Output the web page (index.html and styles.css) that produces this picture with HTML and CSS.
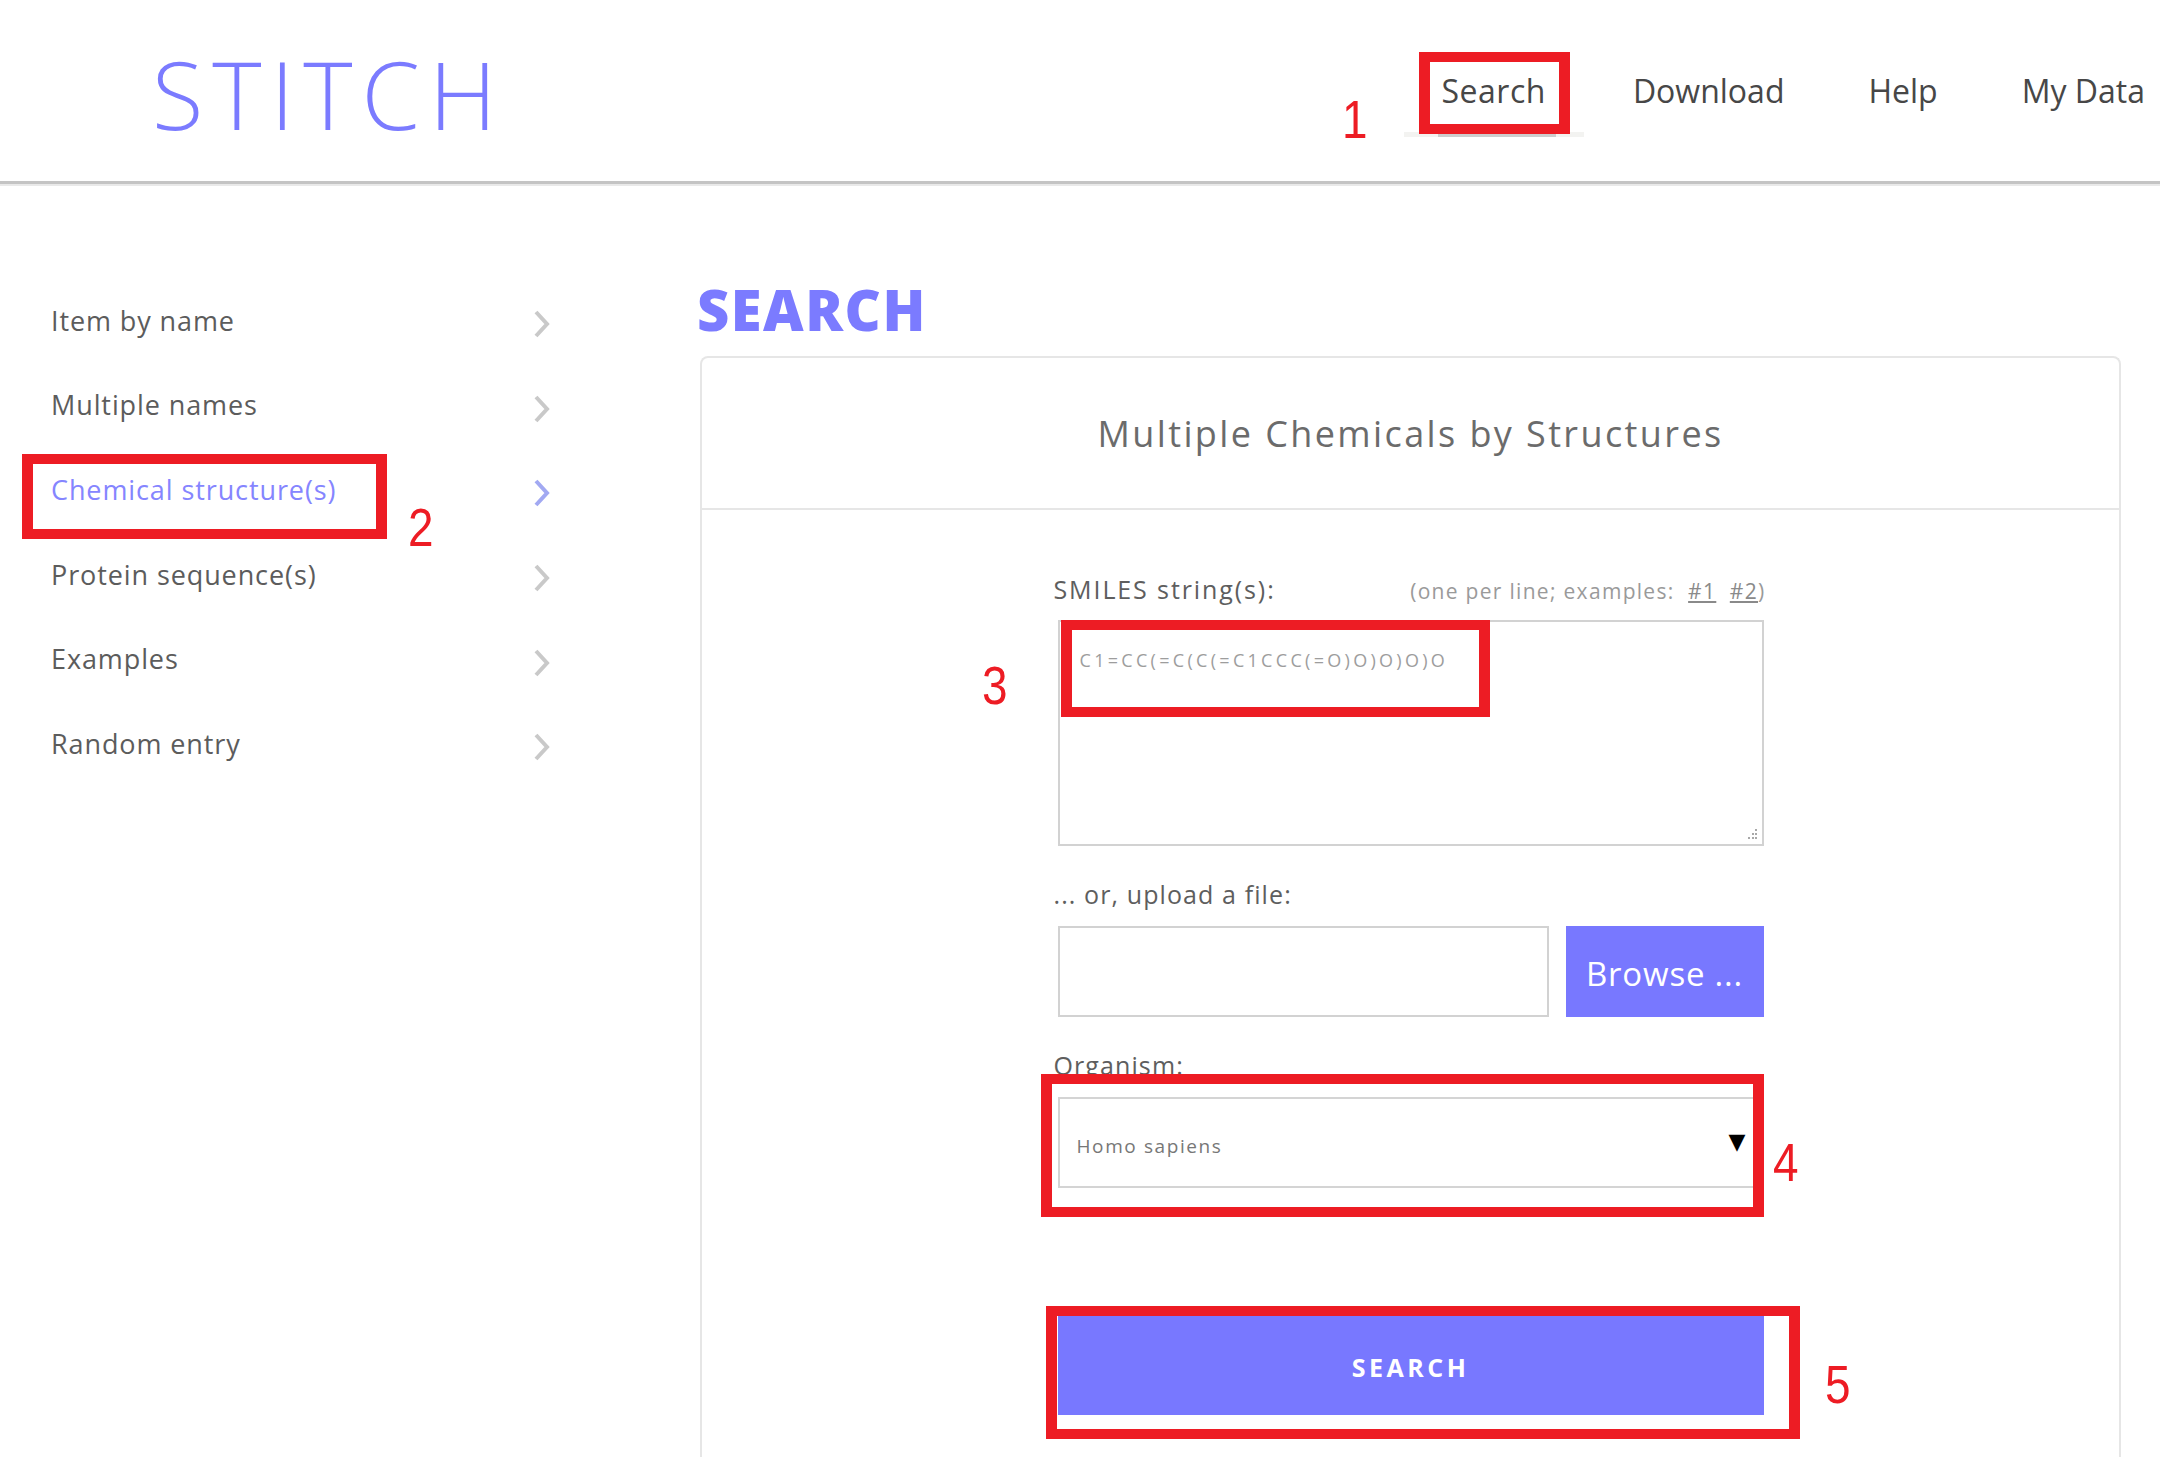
FILE: index.html
```html
<!DOCTYPE html>
<html lang="en">
<head>
<meta charset="utf-8">
<title>STITCH - Search</title>
<link rel="stylesheet" href="styles.css">
</head>
<body>
<header class="topbar">
  <div class="logo">STITCH</div>
  <nav class="nav">
    <a class="nav-item active">Search</a>
    <a class="nav-item">Download</a>
    <a class="nav-item">Help</a>
    <a class="nav-item">My Data</a>
  </nav>
</header>

<div class="page">
  <aside class="sidebar">
    <ul class="side-list">
      <li class="side-item"><span>Item by name</span><svg class="chev" viewBox="0 0 16 28" width="16" height="28"><polyline points="2,2 13,14 2,26"/></svg></li>
      <li class="side-item"><span>Multiple names</span><svg class="chev" viewBox="0 0 16 28" width="16" height="28"><polyline points="2,2 13,14 2,26"/></svg></li>
      <li class="side-item active"><span>Chemical structure(s)</span><svg class="chev" viewBox="0 0 16 28" width="16" height="28"><polyline points="2,2 13,14 2,26"/></svg></li>
      <li class="side-item"><span>Protein sequence(s)</span><svg class="chev" viewBox="0 0 16 28" width="16" height="28"><polyline points="2,2 13,14 2,26"/></svg></li>
      <li class="side-item"><span>Examples</span><svg class="chev" viewBox="0 0 16 28" width="16" height="28"><polyline points="2,2 13,14 2,26"/></svg></li>
      <li class="side-item"><span>Random entry</span><svg class="chev" viewBox="0 0 16 28" width="16" height="28"><polyline points="2,2 13,14 2,26"/></svg></li>
    </ul>
  </aside>

  <main class="content">
    <h1 class="title">SEARCH</h1>
    <section class="card">
      <div class="card-head">Multiple Chemicals by Structures</div>
      <div class="card-body">
        <div class="form">
          <div class="label-row">
            <span class="label label-smiles">SMILES string(s):</span>
            <span class="hint">(one per line; examples: &nbsp;<a class="ex">#1</a> &nbsp;<a class="ex">#2</a>)</span>
          </div>
          <div class="textarea">
            <span class="smiles">C1=CC(=C(C(=C1CCC(=O)O)O)O)O</span>
            <svg class="grip" viewBox="0 0 12 12" width="12" height="12"><rect x="9" y="1" width="2" height="2"/><rect x="6" y="5" width="2" height="2"/><rect x="9" y="5" width="2" height="2"/><rect x="2" y="9" width="2" height="2"/><rect x="6" y="9" width="2" height="2"/><rect x="9" y="9" width="2" height="2"/></svg>
          </div>

          <div class="label label-gap">... or, upload a file:</div>
          <div class="file-row">
            <div class="file-input"></div>
            <div class="browse">Browse ...</div>
          </div>

          <div class="label label-gap">Organism:</div>
          <div class="select">
            <span class="select-text">Homo sapiens</span>
            <span class="select-arrow">&#9660;</span>
          </div>

          <div class="submit">SEARCH</div>
        </div>
      </div>
    </section>
  </main>
</div>

<div class="annotations">
  <div class="ann-box box-1"></div>
  <div class="ann-num num-1">1</div>
  <div class="ann-box box-2"></div>
  <div class="ann-num num-2">2</div>
  <div class="ann-box box-3"></div>
  <div class="ann-num num-3">3</div>
  <div class="ann-box box-4"></div>
  <div class="ann-num num-4">4</div>
  <div class="ann-box box-5"></div>
  <div class="ann-num num-5">5</div>
</div>
</body>
</html>
```

FILE: styles.css
```css
* { box-sizing: border-box; }

html, body {
  margin: 0;
  padding: 0;
  background: #ffffff;
}

body {
  position: relative;
  font-family: "Open Sans", "Liberation Sans", Arial, sans-serif;
  color: #555;
  min-height: 1457px;
  overflow: hidden;
}

/* ---------- header ---------- */
.topbar {
  height: 184px;
  display: flex;
  align-items: center;
  border-bottom: 3px solid #c4c4c4;
  box-shadow: 0 2px 0 #e9e9e9;
}

.logo {
  padding-left: 152px;
  padding-top: 6px;
  font-size: 94px;
  font-weight: 300;
  letter-spacing: 9px;
  line-height: 1;
  color: #7b7bff;
}

.nav {
  margin-left: auto;
  display: flex;
  align-items: center;
  gap: 84px;
  padding-right: 15px;
}

.nav-item {
  position: relative;
  font-size: 32px;
  line-height: 40px;
  color: #474747;
}

.nav-item.active {
  margin-right: 3px;
  letter-spacing: 0.5px;
}

.nav-item.active::before {
  content: "";
  position: absolute;
  left: -38px;
  right: -38px;
  top: 61px;
  height: 5px;
  background: #f3f3f1;
}

.nav-item.active::after {
  content: "";
  position: absolute;
  left: -4px;
  right: -10px;
  top: 63px;
  height: 3px;
  background: #cdcdcd;
}

/* ---------- layout ---------- */
.page {
  display: flex;
  align-items: flex-start;
}

.sidebar {
  width: 700px;
  flex: none;
}

.side-list {
  list-style: none;
  margin: 0;
  padding: 95px 0 0 51px;
  width: 550px;
}

.side-item {
  height: 84.6px;
  display: flex;
  align-items: center;
  justify-content: space-between;
  font-size: 27px;
  letter-spacing: 0.9px;
  color: #5c5c5c;
}

.side-item span {
  margin-top: -2px;
}

.chev {
  margin-top: 6px;
  fill: none;
  stroke: #c9c9c9;
  stroke-width: 4;
}

.side-item.active {
  color: #8585ff;
}

.side-item.active .chev {
  stroke: #a2a9f2;
}

.content {
  flex: 1;
  padding-right: 39px;
}

.title {
  margin: 97px 0 0 -3px;
  font-size: 56px;
  line-height: 56px;
  font-weight: 800;
  letter-spacing: 1.5px;
  color: #7b7bff;
}

/* ---------- card ---------- */
.card {
  margin-top: 19px;
  border: 2px solid #e6e6e6;
  border-bottom: none;
  border-radius: 8px 8px 0 0;
}

.card-head {
  height: 152px;
  display: flex;
  align-items: center;
  justify-content: center;
  border-bottom: 2px solid #e6e6e6;
  font-size: 36px;
  letter-spacing: 2.4px;
  color: #6b6b6b;
}

.card-body {
  padding: 64px 0 120px;
}

.form {
  width: 706px;
  margin: 0 auto;
}

.label-row {
  display: flex;
  justify-content: space-between;
  align-items: baseline;
  height: 30px;
}

.label {
  margin-left: -4px;
  font-size: 25px;
  line-height: 30px;
  color: #5e5e5e;
  letter-spacing: 1.1px;
}

.label-smiles {
  letter-spacing: 1.9px;
}

.hint {
  font-size: 21px;
  color: #9a9a9a;
  letter-spacing: 1.3px;
  margin-right: -2px;
}

.ex {
  color: #8a8a8a;
  text-decoration: underline;
}

.textarea {
  position: relative;
  margin-top: 16px;
  height: 226px;
  border: 2px solid #d2d2d2;
  padding: 26px 0 0 20px;
}

.smiles {
  font-size: 18px;
  line-height: 24px;
  color: #9d9d9d;
  letter-spacing: 3.3px;
}

.grip {
  position: absolute;
  right: 4px;
  bottom: 4px;
  fill: #a8a8a8;
}

.label-gap {
  margin-top: 33px;
}

.file-row {
  margin-top: 17px;
  display: flex;
  gap: 17px;
  height: 91px;
}

.file-input {
  flex: 1;
  border: 2px solid #d2d2d2;
}

.browse {
  width: 198px;
  background: #7878ff;
  color: #ffffff;
  font-size: 33px;
  letter-spacing: 0.8px;
  display: flex;
  align-items: center;
  justify-content: center;
  padding-top: 4px;
}

.select {
  margin-top: 17px;
  height: 91px;
  border: 2px solid #d4d4d4;
  display: flex;
  align-items: center;
  justify-content: space-between;
  padding: 6px 16px 0 17px;
}

.select-text {
  font-size: 19px;
  letter-spacing: 1.6px;
  color: #777;
}

.select-arrow {
  font-family: "DejaVu Sans", sans-serif;
  font-size: 22px;
  color: #000;
  margin-top: -8px;
}

.submit {
  margin-top: 128px;
  height: 99px;
  background: #7878ff;
  color: #ffffff;
  font-size: 25px;
  font-weight: 700;
  letter-spacing: 3.5px;
  display: flex;
  align-items: center;
  justify-content: center;
  padding-top: 2px;
}

/* ---------- annotations (overlay) ---------- */
.annotations {
  position: absolute;
  left: 0;
  top: 0;
  width: 100%;
  height: 100%;
  pointer-events: none;
}

.ann-box {
  position: absolute;
  border: 10px solid #ed1c24;
  border-left-width: 11px;
  border-right-width: 11px;
}

.box-1 { left: 1419px; top: 52px;   width: 151px; height: 82px; }
.box-2 { left: 22px;   top: 454px;  width: 365px; height: 85px; }
.box-3 { left: 1061px; top: 620px;  width: 429px; height: 97px; }
.box-4 { left: 1041px; top: 1074px; width: 723px; height: 143px; }
.box-5 { left: 1046px; top: 1306px; width: 754px; height: 133px; }

.ann-num {
  position: absolute;
  font-family: "Liberation Sans", Arial, sans-serif;
  font-size: 54px;
  line-height: 54px;
  color: #ed1c24;
  transform: scaleX(0.85);
  transform-origin: left top;
}

.num-1 { left: 1342px; top: 92px; }
.num-2 { left: 408px;  top: 500px; }
.num-3 { left: 982px;  top: 658px; }
.num-4 { left: 1773px; top: 1135px; }
.num-5 { left: 1825px; top: 1357px; }
```
